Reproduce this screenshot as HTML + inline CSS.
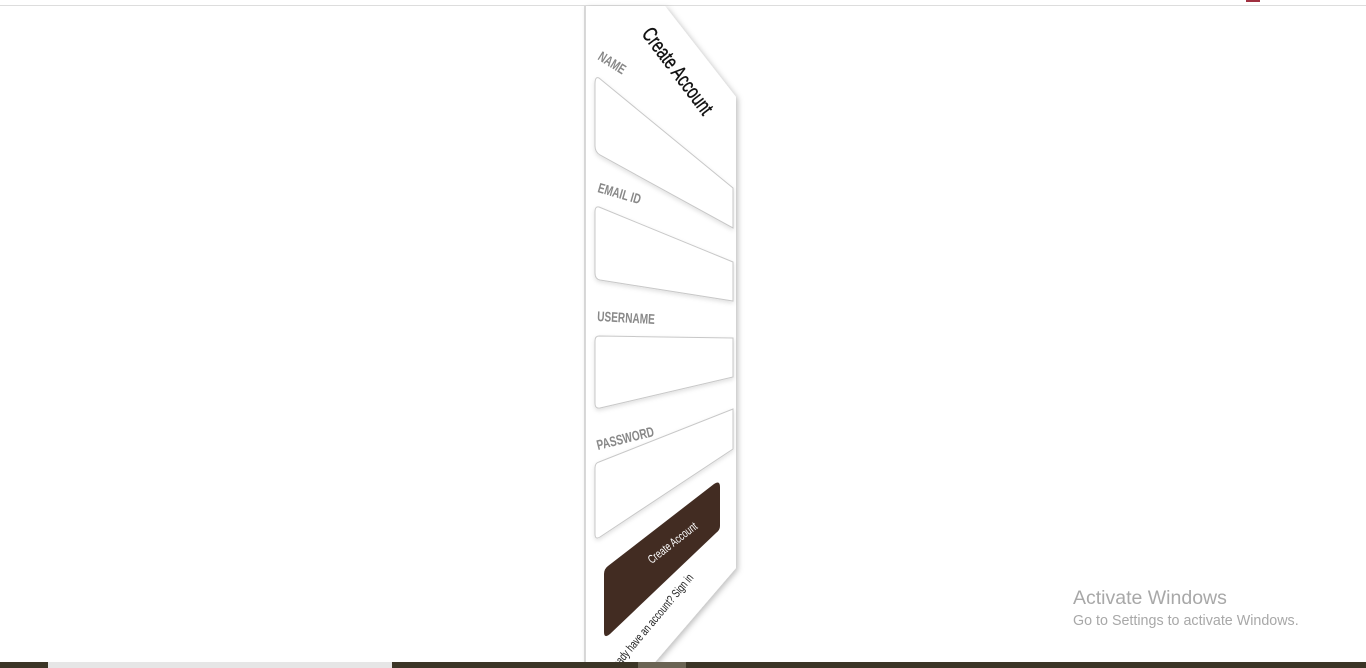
<!DOCTYPE html>
<html><head><meta charset="utf-8"><style>
html,body{margin:0;padding:0;background:#fff;width:1366px;height:668px;overflow:hidden;font-family:"Liberation Sans",sans-serif}
svg{position:absolute;left:0;top:0}
</style></head><body>
<svg width="1366" height="668" viewBox="0 0 1366 668">
<defs>
<filter id="sh" x="-20%" y="-20%" width="140%" height="140%"><feDropShadow dx="2" dy="2" stdDeviation="3" flood-color="#000" flood-opacity="0.25"/></filter>
<filter id="ish" x="-10%" y="-10%" width="120%" height="120%"><feDropShadow dx="0" dy="2" stdDeviation="2" flood-color="#000" flood-opacity="0.12"/></filter>
</defs>
<line x1="0" y1="5.5" x2="1366" y2="5.5" stroke="#ddd" stroke-width="1"/>
<rect x="1246" y="0" width="14" height="2" fill="#a03040"/>
<polygon points="585,6 665,6 736,97 736,568 650,668 585,668" fill="#fff" filter="url(#sh)"/>
<line x1="585" y1="6" x2="585" y2="668" stroke="#ccc" stroke-width="1.5"/>
<g fill="#fff" stroke="#c8c8c8" stroke-width="1" filter="url(#ish)">
<path d="M599,78 L733,188 L733,228 L600,155 Q595,152 595,146 L595,84 Q595,76 599,78Z"/>
<path d="M599,207 L733,262 L733,301 L600,280 Q595,279 595,273 L595,212 Q595,206 599,207Z"/>
<path d="M599,336 L733,338 L733,377 L600,408 Q595,409 595,403 L595,341 Q595,336 599,336Z"/>
<path d="M599,462 L733,409 L733,449 L600,537 Q595,540 595,534 L595,468 Q595,463 599,462Z"/>
</g>
<path d="M608,566 L714,484 Q720,480 720,487 L720,526 Q720,530 716,533 L610,634 Q604,639 604,632 L604,574 Q604,569 608,566Z" fill="#422c22"/>
<g fill="#888" font-size="14" font-weight="bold" font-family="Liberation Sans, sans-serif">
<text transform="translate(597,59) rotate(32) scale(0.72,1)">NAME</text>
<text transform="translate(597,192) rotate(16) scale(0.72,1)">EMAIL ID</text>
<text transform="translate(597,321) rotate(3) scale(0.72,1)">USERNAME</text>
<text transform="translate(598,450) rotate(-14) scale(0.72,1)">PASSWORD</text>
</g>
<text transform="translate(641,34) rotate(53) scale(0.72,1)" font-size="21" fill="#111" stroke="#111" stroke-width="0.4">Create Account</text>
<text transform="translate(675,546) rotate(-38) scale(0.72,1)" font-size="12" fill="#fff" text-anchor="middle">Create Account</text>
<text transform="translate(694,578) rotate(-50) scale(0.72,1)" font-size="12" fill="#222" text-anchor="end">Already have an account? Sign in</text>
<rect x="0" y="662" width="1366" height="6" fill="#3b3526"/>
<rect x="48" y="662" width="344" height="6" fill="#e6e6e6"/>
<rect x="638" y="662" width="48" height="6" fill="#6a6454"/>
<text x="1073" y="604" font-size="19.5" fill="#a8a8a8">Activate Windows</text>
<text x="1073" y="625" font-size="14.3" fill="#a8a8a8">Go to Settings to activate Windows.</text>
</svg>
</body></html>
